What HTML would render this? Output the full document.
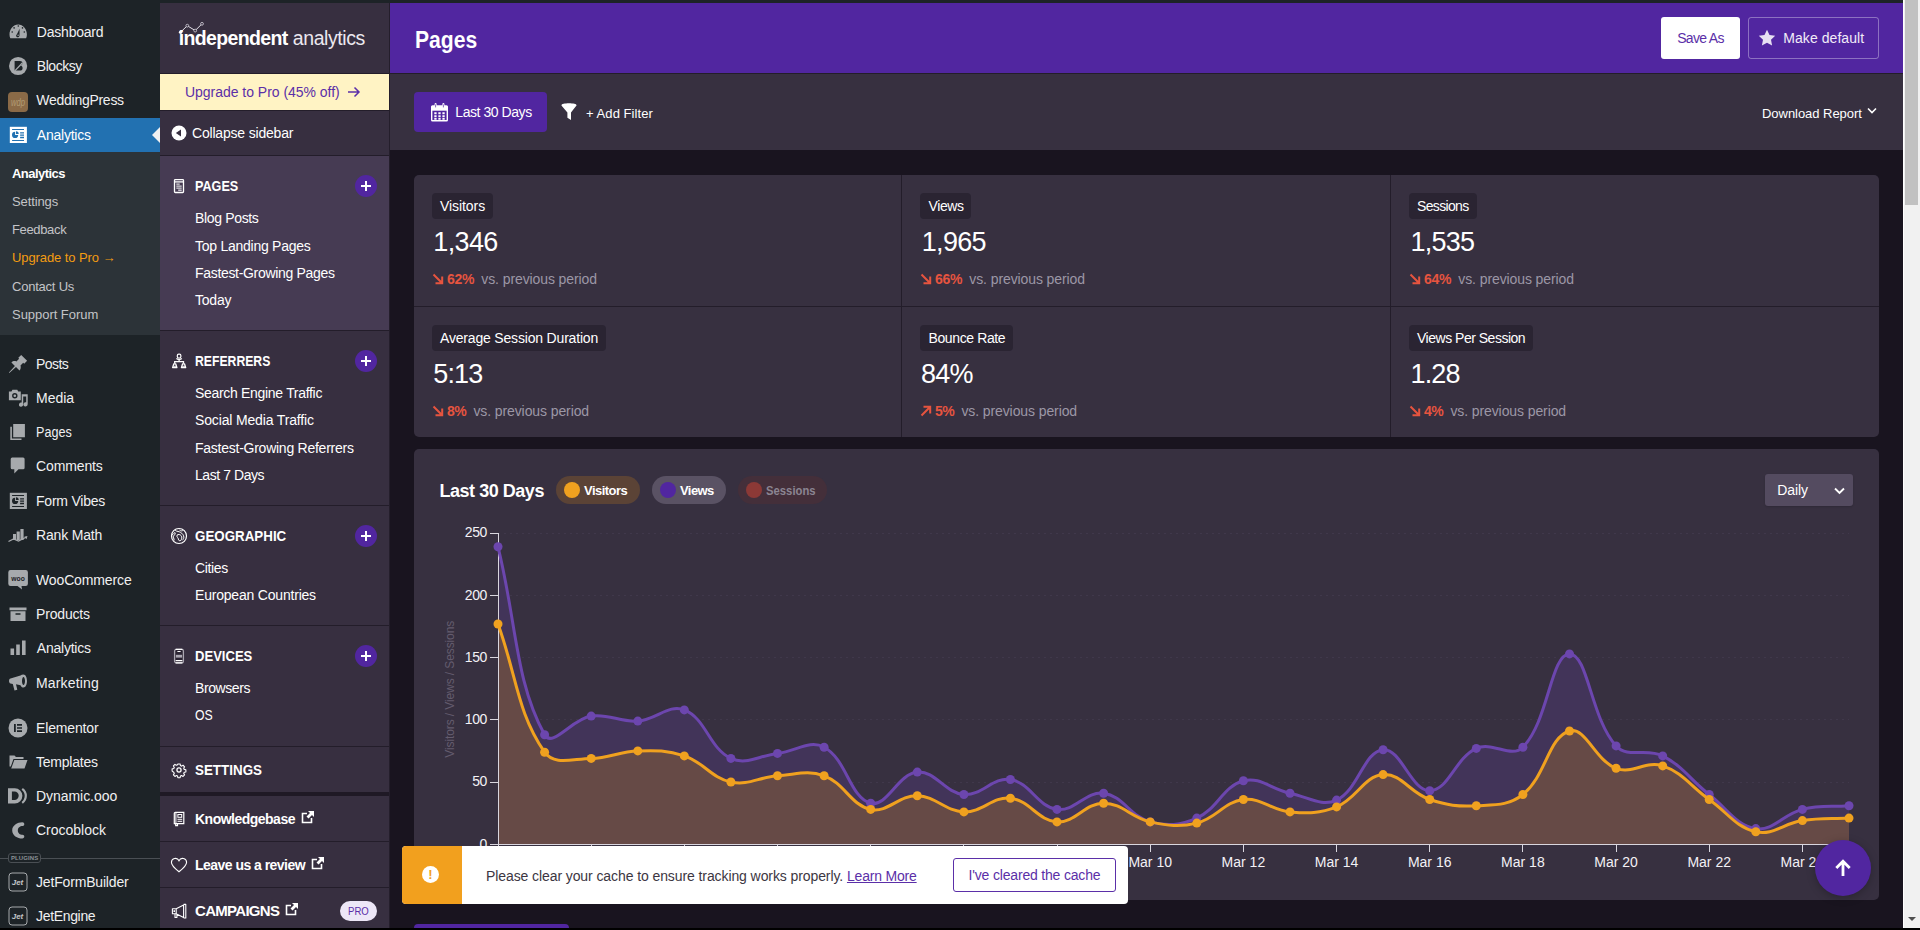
<!DOCTYPE html><html lang="en"><head><meta charset="utf-8"><title>Pages - Independent Analytics</title>
<style>
*{box-sizing:border-box;margin:0;padding:0}
html,body{width:1920px;height:930px;overflow:hidden;background:#19141f}
body{position:relative;font-family:"Liberation Sans",sans-serif;font-size:14px;color:#fff;-webkit-font-smoothing:antialiased}
.abs{position:absolute}
svg{display:block}
/* top / bottom strips */
#topstrip{position:absolute;left:0;top:0;width:1920px;height:3px;background:#1d2327;z-index:50}
#botstrip{position:absolute;left:0;top:928px;width:1920px;height:2px;background:#000;z-index:60}
/* scrollbar */
#sb{position:absolute;left:1903px;top:0;width:17px;height:928px;background:#f1f1f1;border-left:1px solid #fff;z-index:55}
#sb .thumb{position:absolute;left:1px;top:0;width:13px;height:205px;background:#c1c1c1}
#sb .arr{position:absolute;left:4px;width:0;height:0;border-left:4px solid transparent;border-right:4px solid transparent}
#sb .up{top:6px;border-bottom:4px solid #a3a3a3}
#sb .dn{top:917px;border-top:4px solid #505050}
/* WP admin menu */
#wp{position:absolute;left:0;top:0;width:160px;height:930px;background:#1d2327}
#wp .it{position:absolute;left:0;width:160px;height:34px;line-height:34px;color:#f0f0f1;font-size:14px;padding-left:36px;white-space:nowrap}
#wp .it svg{position:absolute;left:8px;top:7px;width:20px;height:20px}
#wp .act{background:#2271b1;color:#fff}
#wp .act:after{content:"";position:absolute;right:0;top:9px;border:8px solid transparent;border-right-color:#f0f0f1}
#wp .sub{position:absolute;left:0;top:152px;width:160px;height:183px;background:#2c3338}
#wp .si{position:absolute;left:12px;height:28px;line-height:28px;font-size:13px;color:#c3c4c7;white-space:nowrap}
#wp .plg{position:absolute;left:0;top:858px;width:160px;height:1px;background:#4a4f54}
#wp .plg span{position:absolute;left:8px;top:-5px;height:10px;line-height:8px;font-size:6px;font-weight:bold;letter-spacing:.1px;color:#8c9196;background:#1d2327;border:1px solid #4a4f54;border-radius:3px;padding:0 2px}
/* IA sidebar */
#ia{position:absolute;left:160px;top:0;width:229px;height:930px;background:#372f40}
#iab{position:absolute;left:389px;top:0;width:1px;height:930px;background:#241e2b}
#ia .ln{position:absolute;left:0;width:229px;height:1px;background:#231d2a}
#ia .h{position:absolute;left:35px;font-size:15px;font-weight:bold;color:#fff;height:24px;line-height:24px;white-space:nowrap}
#ia .m{position:absolute;left:35px;font-size:14px;color:#fff;height:22px;line-height:22px;white-space:nowrap}
#ia .ic{position:absolute;left:10px;width:18px;height:18px}
#ia .plus{position:absolute;left:195px;width:22px;height:22px;border-radius:11px;background:#5126a0}
#ia .plus:before{content:"";position:absolute;left:6px;top:10px;width:10px;height:2px;background:#fff}
#ia .plus:after{content:"";position:absolute;left:10px;top:6px;width:2px;height:10px;background:#fff}
/* main */
#hdr{position:absolute;left:390px;top:3px;width:1513px;height:70px;background:#5126a0}
#hdrl{position:absolute;left:390px;top:73px;width:1513px;height:1px;background:#231d2a}
#tb{position:absolute;left:390px;top:74px;width:1513px;height:76px;background:#373040}
.card{position:absolute;background:#373040;border-radius:5px}
.stat{position:absolute;width:488px;height:131px}
.stat .lb{position:absolute;left:18px;top:18px;height:26px;line-height:26px;padding:0 8px;background:#2a2432;border-radius:4px;font-size:14px;color:#fff;white-space:nowrap}
.stat .num{position:absolute;left:18px;top:48px;height:38px;line-height:38px;font-size:27px;color:#fff;white-space:nowrap}
.stat .chg{position:absolute;left:18px;top:93px;height:22px;line-height:22px;font-size:14px;color:#9c97a6;white-space:nowrap}
.stat .chg b{color:#e6543f;font-weight:bold;margin-left:15px;margin-right:7px}
.stat .chg svg{position:absolute;left:0;top:5px;width:12px;height:12px}
.pill{position:absolute;top:476px;height:28px;border-radius:14px;font-size:13px;font-weight:bold;line-height:28px;white-space:nowrap}
.pill i{position:absolute;left:8px;top:6px;width:16px;height:16px;border-radius:8px}
.pill>span{position:absolute;left:28px;top:1px}
.chart{position:absolute;left:0;top:0}
.chart text.ax{font-family:"Liberation Sans",sans-serif;font-size:14px;fill:#f3f1f6}
.chart text.ay{letter-spacing:-.4px}
.chart text.ayt{font-family:"Liberation Sans",sans-serif;font-size:12px;fill:#645c6e;letter-spacing:-.1px}
</style></head>
<body>
<div id="topstrip"></div><div id="botstrip"></div>
<div id="sb"><div class="thumb"></div><div class="arr dn"></div></div>

<div id="wp">
 <div class="it" style="top:15px"><svg viewBox="0 0 20 20"><path fill="#a7aaad" d="M2.300 16.200A8.700 8.700 0 0 1 1.500 12.500C1.500 7.200 5.400 2.500 10.200 2.500S18.900 7.200 18.900 12.500a8.700 8.700 0 0 1-.800 3.700z"></path><path fill="#1d2327" d="M11.600 6.800l-2.700 5.400a1.700 1.700 0 1 0 2.600 1.400zM9.500 4a.8.800 0 1 0 1.600 0 .8.800 0 0 0-1.600 0zM5.300 5.900a.8.800 0 1 0 1.600 0 .8.800 0 0 0-1.600 0zM13.700 5.900a.8.800 0 1 0 1.600 0 .8.800 0 0 0-1.600 0zM3.400 10a.8.800 0 1 0 1.600 0 .8.800 0 0 0-1.600 0zM15.500 10a.8.800 0 1 0 1.600 0 .8.800 0 0 0-1.600 0z"></path><circle cx="10.100" cy="13.300" r=".7" fill="#a7aaad"></circle></svg><span style="letter-spacing:-0.21px;position:relative;left:0.8px;">Dashboard</span></div>
 <div class="it" style="top:49px"><svg viewBox="0 0 20 20"><circle cx="10.100" cy="10" r="9.100" fill="#a7aaad"></circle><path fill="#1d2327" d="M6.600 5h5.400c1.500 0 2.400.9 2.400 2.200 0 1.100-.6 1.900-1.700 2.400 1.300.4 1.900 1.300 1.900 2.600 0 1.500-1 2.400-2.600 2.400H6.600z"></path><path d="M6.800 14.900L14.300 7" stroke="#a7aaad" stroke-width="1.300"></path></svg><span style="letter-spacing:-0.46px;position:relative;left:0.8px;">Blocksy</span></div>
 <div class="it" style="top:83px"><svg viewBox="0 0 20 20" style="top:9px"><rect x="0" y="0" width="20" height="20" rx="4" fill="#8a6a47"></rect><text x="10" y="13.500" text-anchor="middle" font-family="Liberation Sans,sans-serif" font-style="italic" font-size="10" textLength="14" lengthAdjust="spacingAndGlyphs" fill="#b39c74">wdp</text></svg><span style="letter-spacing:-0.27px;position:relative;left:0.3px;">WeddingPress</span></div>
 <div class="it act" style="top:118px"><svg viewBox="0 0 20 20"><rect x="1.800" y="1.800" width="17.100" height="16.200" fill="#fff"></rect><path d="M4.100 4.500H16M4.100 15.500H16" stroke="#2271b1" stroke-width="1"></path><path d="M12.100 7.800H16M12.100 10.100H16M12.100 12.500H16" stroke="#2271b1" stroke-width="1.300"></path><path d="M7.100 9.900V6.800A3.100 3.100 0 1 0 10.200 9.900z" fill="#2271b1"></path><path d="M8 9V6.300A2.700 2.700 0 0 1 10.700 9z" fill="#2271b1"></path></svg><span style="letter-spacing:-0.23px;position:relative;left:0.8px;">Analytics</span></div>
 <div class="sub">
  <div class="si" style="top:8px;color:#fff;font-weight:bold"><span style="letter-spacing:-0.55px;">Analytics</span></div>
  <div class="si" style="top:36px"><span style="letter-spacing:-0.11px;">Settings</span></div>
  <div class="si" style="top:64px"><span style="letter-spacing:-0.35px;">Feedback</span></div>
  <div class="si" style="top:92px;color:#f39c12"><span style="letter-spacing:-0.09px;">Upgrade to Pro →</span></div>
  <div class="si" style="top:121px"><span style="letter-spacing:-0.22px;">Contact Us</span></div>
  <div class="si" style="top:149px"><span style="letter-spacing:-0.04px;">Support Forum</span></div>
 </div>
 <div class="it" style="top:347px"><svg viewBox="0 0 20 20"><path fill="#a7aaad" d="M10.300 3.800L13.200.9l5.900 5.900-2.900 2.900-1-.9-2.700 2.700c.6 1.800.2 3.700-1 5l-3.500-3.500L1.300 19 .9 18.600l6-6.700-3.500-3.500c1.300-1.200 3.200-1.600 5-1l2.700-2.700z"></path></svg><span style="letter-spacing:-0.56px;">Posts</span></div>
 <div class="it" style="top:381px"><svg viewBox="0 0 20 20"><path fill="#a7aaad" d="M12.800 3.500v8.800H.9V3.500h2.600l.9-1.800h4.900l.9 1.800zM6.800 10.400a2.700 2.700 0 1 0 0-5.400 2.700 2.700 0 0 0 0 5.400zM6.800 9a1.300 1.300 0 1 1 0-2.600 1.300 1.300 0 0 1 0 2.600z" fill-rule="evenodd"></path><path fill="#a7aaad" d="M13.700 6.300h6v10a2.100 2.100 0 1 1-1.500-2V8.500h-3v8.100a2.100 2.100 0 1 1-1.500-2z"></path></svg><span style="letter-spacing:-0.01px;">Media</span></div>
 <div class="it" style="top:415px"><svg viewBox="0 0 20 20"><path fill="#a7aaad" d="M5.200 1.900h11.700v13.300H5.200zM2.300 4.700h1.600v11.700h9.600V18H2.300z"></path></svg><span style="display:inline-block;transform:scaleX(0.899);transform-origin:0 50%;">Pages</span></div>
 <div class="it" style="top:449px"><svg viewBox="0 0 20 20"><path fill="#a7aaad" d="M4.200 1.400h10.900a1.500 1.500 0 0 1 1.500 1.500v8.800a1.500 1.500 0 0 1-1.500 1.500h-4.600L6.300 17.400v-4.200H4.200a1.500 1.500 0 0 1-1.500-1.500V2.900a1.500 1.500 0 0 1 1.500-1.500z"></path></svg><span style="letter-spacing:-0.12px;">Comments</span></div>
 <div class="it" style="top:484px"><svg viewBox="0 0 20 20"><rect x="1.800" y="1.800" width="17.100" height="16.200" fill="#a7aaad"></rect><path d="M4.100 4.500H16M4.100 15.500H16" stroke="#1d2327" stroke-width="1"></path><path d="M12.100 7.800H16M12.100 10.100H16M12.100 12.500H16" stroke="#1d2327" stroke-width="1.300"></path><path d="M7.100 9.900V6.800A3.100 3.100 0 1 0 10.200 9.900z" fill="#1d2327"></path><path d="M8 9V6.300A2.700 2.700 0 0 1 10.700 9z" fill="#1d2327"></path></svg><span style="letter-spacing:-0.22px;">Form Vibes</span></div>
 <div class="it" style="top:518px"><svg viewBox="0 0 20 20"><path fill="#a7aaad" d="M5 9h3v6H5zM8.600 6.500h3.200V15H8.600zM12.400 4h3.200v11h-3.200z"></path><path fill="none" stroke="#a7aaad" stroke-width="1.200" d="M.500 16.500l5-2.500 5 2 8-4"></path><path fill="#a7aaad" d="M19.500 11l-1 3.200-2.200-2.400z"></path></svg><span style="letter-spacing:-0.17px;">Rank Math</span></div>
 <div class="it" style="top:563px"><svg viewBox="0 0 20 20"><path fill="#a7aaad" d="M2.500 0h15.200A2.200 2.200 0 0 1 19.900 2.200v11.600a2.200 2.200 0 0 1-2.200 2.200H13.500l.500 3.500-4.500-3.500H2.500a2.200 2.200 0 0 1-2.200-2.200V2.200A2.200 2.200 0 0 1 2.500 0z"></path><text x="10.100" y="10.800" text-anchor="middle" font-family="Liberation Sans,sans-serif" font-weight="bold" font-size="7" textLength="13.500" lengthAdjust="spacingAndGlyphs" fill="#1d2327">woo</text></svg><span style="letter-spacing:-0.13px;">WooCommerce</span></div>
 <div class="it" style="top:597px"><svg viewBox="0 0 20 20"><path fill="#a7aaad" d="M1.500 3.500h17v2.800h-17zM2.500 7.200h15V17h-15zM7.500 9.200v1.500h5V9.200z"></path></svg><span style="letter-spacing:-0.17px;">Products</span></div>
 <div class="it" style="top:631px"><svg viewBox="0 0 20 20"><path fill="#a7aaad" d="M2.500 10.500h3.600V17H2.500zM8.200 6.500h3.600V17H8.200zM14 2.500h3.600V17H14z"></path></svg><span style="letter-spacing:-0.23px;position:relative;left:0.8px;">Analytics</span></div>
 <div class="it" style="top:666px"><svg viewBox="0 0 20 20"><path fill="#a7aaad" d="M15.500 1.500c2 0 3.500 2.900 3.500 6.500s-1.500 6.500-3.500 6.500c-1.300 0-2.400-.9-3-2.300L8 11.200l1.300 5.600-2.800.700L4.800 11l-2.300-.5C1.500 10.300 1 9.200 1 8s.500-2.300 1.500-2.500l10-3C13.200 1.900 14.300 1.500 15.500 1.500zM15.500 4c-.800 0-1.500 1.800-1.500 4s.700 4 1.500 4S17 10.200 17 8s-.700-4-1.500-4z"></path></svg><span style="letter-spacing:0.16px;">Marketing</span></div>
 <div class="it" style="top:711px"><svg viewBox="0 0 20 20"><circle cx="10" cy="10" r="9.500" fill="#a7aaad"></circle><path fill="#1d2327" d="M6 6h1.800v8H6zM9 6h5v1.700H9zM9 9.150h5v1.700H9zM9 12.300h5V14H9z"></path></svg><span style="letter-spacing:-0.15px;">Elementor</span></div>
 <div class="it" style="top:745px"><svg viewBox="0 0 20 20"><path fill="#a7aaad" d="M1.500 3.500h5l1.500 1.500h7.500V7H5.500L2.800 14.500H1.500zM6.300 8H19.500l-3 8.500H3.200z"></path></svg><span style="letter-spacing:-0.23px;">Templates</span></div>
 <div class="it" style="top:779px"><svg viewBox="0 0 20 20"><path fill="#a7aaad" d="M0 2.200h6.800a7.600 7.600 0 0 1 0 15.200H0zM3.900 5.600v8.400h2.600a4.200 4.200 0 0 0 0-8.400z"></path><path fill="none" stroke="#a7aaad" stroke-width="2.200" d="M14.200 2.800a8.600 8.600 0 0 1 0 14"></path></svg><span style="letter-spacing:-0.05px;">Dynamic.ooo</span></div>
 <div class="it" style="top:813px"><svg viewBox="0 0 20 20"><path fill="#a7aaad" d="M14.300 2.300c1.300 0 2 .9 2 1.900 0 1.100-.800 1.800-1.900 1.800-2.300 0-4.600 1.700-4.600 4.400s2.300 4.400 4.600 4.400c1.100 0 1.900.7 1.900 1.800 0 1-.700 1.900-2 1.900C9.300 18.500 4.200 15.300 4.200 10.400S9.300 2.300 14.300 2.300z"></path></svg><span style="letter-spacing:-0.01px;">Crocoblock</span></div>
 <div class="plg"><span>PLUGINS</span></div>
 <div class="it" style="top:865px"><svg viewBox="0 0 20 20"><rect x="1" y="1" width="18" height="18" rx="3" fill="none" stroke="#a7aaad" stroke-width="1"></rect><text x="9.500" y="13" text-anchor="middle" font-family="Liberation Sans,sans-serif" font-style="italic" font-weight="bold" font-size="8" fill="#c3c5c8">Jet</text></svg><span style="letter-spacing:-0.17px;">JetFormBuilder</span></div>
 <div class="it" style="top:899px"><svg viewBox="0 0 20 20"><rect x="1" y="1" width="18" height="18" rx="3" fill="none" stroke="#a7aaad" stroke-width="1"></rect><text x="9.500" y="13" text-anchor="middle" font-family="Liberation Sans,sans-serif" font-style="italic" font-weight="bold" font-size="8" fill="#c3c5c8">Jet</text></svg><span style="letter-spacing:-0.33px;">JetEngine</span></div>
</div>

<div id="ia">
 <!-- logo -->
 <svg class="abs" style="left:18px;top:20px" width="40" height="16" viewBox="0 0 40 16"><path d="M2.600 12.200L9.300 5.700l7.900 4.900L24 3.800" fill="none" stroke="#e4e1e9" stroke-width="1"></path><circle cx="2.600" cy="12.200" r="1.700" fill="#fff"></circle><circle cx="9.300" cy="5.700" r="1.400" fill="#372f40" stroke="#d6d2dc" stroke-width=".8"></circle><circle cx="17.200" cy="10.600" r="1.400" fill="#372f40" stroke="#d6d2dc" stroke-width=".8"></circle><circle cx="24" cy="3.800" r="1.400" fill="#372f40" stroke="#d6d2dc" stroke-width=".8"></circle></svg>
 <div class="abs" id="logo" style="left:19px;top:24px;height:28px;line-height:28px;font-size:19.5px;white-space:nowrap;letter-spacing:-.9px"><b><span style="letter-spacing:-0.64px;position:relative;left:-0.3px;">independent</span></b> <span style="color:#ebe8ef;letter-spacing:-.5px"><span style="letter-spacing:-0.43px;position:relative;left:0.4px;">analytics</span></span></div>
 <div class="ln" style="top:73px"></div>
 <!-- upgrade banner -->
 <div class="abs" style="left:0;top:74px;width:229px;height:36px;background:#fff3c4"></div>
 <div class="abs" id="upg" style="left:25px;top:74px;height:36px;line-height:36px;font-size:14px;color:#5b2fa8;white-space:nowrap"><span style="letter-spacing:-0.03px;">Upgrade to Pro (45% off)</span></div>
 <svg class="abs" style="left:187px;top:86px" width="14" height="12" viewBox="0 0 14 12"><path d="M1 6h11M7.500 1.500L12 6l-4.500 4.500" fill="none" stroke="#5b2fa8" stroke-width="1.500"></path></svg>
 <div class="ln" style="top:110px"></div>
 <!-- collapse -->
 <svg class="abs" style="left:11px;top:125px" width="16" height="16" viewBox="0 0 16 16"><circle cx="8" cy="8" r="7.500" fill="#fff"></circle><path d="M10 4.500v7L4.800 8z" fill="#372f40"></path></svg>
 <div class="m" id="coll" style="left:32px;top:122px"><span style="letter-spacing:-0.19px;">Collapse sidebar</span></div>
 <div class="ln" style="top:155px"></div>
 <!-- PAGES active -->
 <div class="abs" style="left:0;top:156px;width:229px;height:174px;background:#463b53"></div>
 <svg class="ic" style="top:177px" viewBox="0 0 18 18"><rect x="4.500" y="2.600" width="9" height="12.900" rx=".8" fill="none" stroke="#fff" stroke-width="1.300"></rect><path d="M4.500 4.900h9" stroke="#fff" stroke-width="1.300"></path><path d="M6.300 7.100h3.400M6.300 9.100h5.400M6.300 11.100h5.400" stroke="#fff" stroke-width="1"></path><rect x="8.200" y="12.500" width="3.500" height="1.400" fill="#d9d6de"></rect></svg>
 <div class="h" style="top:174px"><span style="display:inline-block;transform:scaleX(0.842);transform-origin:0 50%;">PAGES</span></div><div class="plus" style="top:175px"></div>
 <div class="m" style="top:207px"><span style="letter-spacing:-0.34px;">Blog Posts</span></div>
 <div class="m" style="top:235px"><span style="letter-spacing:-0.26px;">Top Landing Pages</span></div>
 <div class="m" style="top:262px"><span style="letter-spacing:-0.32px;">Fastest-Growing Pages</span></div>
 <div class="m" style="top:289px"><span style="letter-spacing:-0.23px;">Today</span></div>
 <div class="ln" style="top:330px"></div>
 <!-- REFERRERS -->
 <svg class="ic" style="top:352px" viewBox="0 0 18 18"><rect x="7.300" y="2.200" width="3.600" height="3.800" rx="1.500" fill="none" stroke="#fff" stroke-width="1.200"></rect><path d="M6.500 6.400c.700 1.200 4.500 1.200 5.200 0" fill="none" stroke="#fff" stroke-width="1.300"></path><path d="M9.100 7.600v1.900M4.700 11.500V9.600h8.800v1.900" fill="none" stroke="#fff" stroke-width="1.300"></path><path d="M2.600 15.600l1.200-3.800h1.900l1.200 3.800zM11.400 15.600l1.200-3.800h1.900l1.200 3.800z" fill="none" stroke="#fff" stroke-width="1.300" stroke-linejoin="round"></path><path d="M3.300 14.300h3M12.100 14.300h3" stroke="#fff" stroke-width=".9"></path></svg>
 <div class="h" style="top:349px"><span style="display:inline-block;transform:scaleX(0.814);transform-origin:0 50%;">REFERRERS</span></div><div class="plus" style="top:350px"></div>
 <div class="m" style="top:382px"><span style="letter-spacing:-0.31px;">Search Engine Traffic</span></div>
 <div class="m" style="top:409px"><span style="letter-spacing:-0.15px;">Social Media Traffic</span></div>
 <div class="m" style="top:437px"><span style="letter-spacing:-0.25px;">Fastest-Growing Referrers</span></div>
 <div class="m" style="top:464px"><span style="letter-spacing:-0.43px;">Last 7 Days</span></div>
 <div class="ln" style="top:505px"></div>
 <!-- GEOGRAPHIC -->
 <svg class="ic" style="top:527px" viewBox="0 0 18 18"><circle cx="9" cy="9" r="7.500" fill="none" stroke="#fff" stroke-width="1.200"></circle><path d="M5 2.800c.600 1.700 2.700 1.300 4.300 2s3.500 1.900 4.300 4-.4 3.600-1.300 4.500M2 8c1.500-.5 1.800-2.200 3-2.500.9 1-.5 2.500-1.500 3.500s1 2.500.5 4.500M7 8.200c1.200-1.200 3.200-.8 4.200.5s.8 3.500-.400 4.600-2.300.2-2.500-1.300-.9-1.300-1.300-2.300zM12.800 3.600c-1 .6-2.200.3-3.300-.5" fill="none" stroke="#fff" stroke-width="1"></path></svg>
 <div class="h" style="top:524px"><span style="display:inline-block;transform:scaleX(0.890);transform-origin:0 50%;">GEOGRAPHIC</span></div><div class="plus" style="top:525px"></div>
 <div class="m" style="top:557px"><span style="letter-spacing:-0.34px;">Cities</span></div>
 <div class="m" style="top:584px"><span style="letter-spacing:-0.20px;">European Countries</span></div>
 <div class="ln" style="top:625px"></div>
 <!-- DEVICES -->
 <svg class="ic" style="top:647px" viewBox="0 0 18 18"><rect x="4.600" y="2.400" width="8.800" height="13.400" rx="1.600" fill="#2b2433" stroke="#aaa6b1" stroke-width="1.300"></rect><path d="M5.600 2.400h6.800M5.600 15.800h6.800M5.600 13.600h6.800" stroke="#fff" stroke-width="1.300"></path><path d="M7.400 4h3.200v1h-3.200z" fill="#fff"></path><path d="M5.900 7.800h6.200v2.800H5.900z" fill="#aaa6b1"></path></svg>
 <div class="h" style="top:644px"><span style="display:inline-block;transform:scaleX(0.870);transform-origin:0 50%;">DEVICES</span></div><div class="plus" style="top:645px"></div>
 <div class="m" style="top:677px"><span style="letter-spacing:-0.42px;">Browsers</span></div>
 <div class="m" style="top:704px"><span style="display:inline-block;transform:scaleX(0.875);transform-origin:0 50%;">OS</span></div>
 <div class="ln" style="top:746px"></div>
 <!-- SETTINGS -->
 <svg class="ic" style="top:761px" viewBox="0 0 18 18"><g transform="translate(9 9) scale(.86) translate(-9 -9)"><circle cx="9" cy="9" r="2.400" fill="none" stroke="#fff" stroke-width="1.500"></circle><path d="M7.700 2h2.600l.4 1.900 1.300.6 1.700-1 1.800 1.800-1 1.700.6 1.300 1.900.4v2.600l-1.900.4-.6 1.300 1 1.700-1.800 1.800-1.700-1-1.300.6-.4 1.900H7.700l-.4-1.900-1.300-.6-1.700 1-1.800-1.800 1-1.700-.6-1.300L1 10.300V7.700l1.900-.4.600-1.300-1-1.700 1.800-1.800 1.700 1 1.300-.6z" fill="none" stroke="#fff" stroke-width="1.300" stroke-linejoin="round"></path></g></svg>
 <div class="h" style="top:758px"><span style="display:inline-block;transform:scaleX(0.893);transform-origin:0 50%;">SETTINGS</span></div>
 <div class="ln" style="top:792px;height:4px;background:#1f1925"></div>
 <!-- Knowledgebase -->
 <svg class="ic" style="top:810px" viewBox="0 0 18 18"><path d="M5.300 2.300h8.500v11.400H4.300V3.300a1 1 0 0 1 1-1zM5.700 13.700v2h1.800v-2" fill="none" stroke="#fff" stroke-width="1.200"></path><path d="M5.900 2.300v11.400" stroke="#fff" stroke-width="1"></path><rect x="7.900" y="4.500" width="3.800" height="2.800" fill="none" stroke="#fff" stroke-width="1"></rect><path d="M7.500 9.300h4.700M7.500 11.300h4.700" stroke="#fff" stroke-width="1"></path></svg>
 <div class="h" style="top:807px;font-size:14px"><span style="letter-spacing:-0.51px;">Knowledgebase</span></div>
 <svg class="abs ext" style="left:141px;top:810px" width="14" height="14" viewBox="0 0 14 14"><path d="M10.500 8v4.500h-9v-9H6" fill="none" stroke="#fff" stroke-width="1.600"></path><path d="M7 1h6v6l-2-2-3.500 3.500-2-2L9 3z" fill="#fff"></path></svg>
 <div class="ln" style="top:841px"></div>
 <svg class="ic" style="top:856px" viewBox="0 0 18 18"><path d="M9 15.700C3.500 11.500 1.400 9 1.400 6.300A4 4 0 0 1 9 4.700a4 4 0 0 1 7.600 1.600C16.600 9 14.500 11.500 9 15.700z" fill="none" stroke="#fff" stroke-width="1.100"></path></svg>
 <div class="h" style="top:853px;font-size:14px"><span style="letter-spacing:-0.53px;">Leave us a review</span></div>
 <svg class="abs ext" style="left:151px;top:856px" width="14" height="14" viewBox="0 0 14 14"><path d="M10.500 8v4.500h-9v-9H6" fill="none" stroke="#fff" stroke-width="1.600"></path><path d="M7 1h6v6l-2-2-3.500 3.500-2-2L9 3z" fill="#fff"></path></svg>
 <div class="ln" style="top:887px"></div>
 <svg class="ic" style="top:902px" viewBox="0 0 18 18"><path d="M2.400 6.700h3.800v5H2.400zM6.200 6.700L13.600 3v12.400L6.200 11.700M13.600 2.400h2.200v13.600h-2.200M5 11.700v3.800h1.900v-3.800" fill="none" stroke="#fff" stroke-width="1.100" stroke-linejoin="round"></path><path d="M3.500 8.300h1.500v1.600H3.500z" fill="#fff"></path></svg>
 <div class="h" style="top:899px"><span style="letter-spacing:-0.70px;">CAMPAIGNS</span></div>
 <svg class="abs ext" style="left:125px;top:902px" width="14" height="14" viewBox="0 0 14 14"><path d="M10.500 8v4.500h-9v-9H6" fill="none" stroke="#fff" stroke-width="1.600"></path><path d="M7 1h6v6l-2-2-3.500 3.500-2-2L9 3z" fill="#fff"></path></svg>
 <div class="abs" style="left:180px;top:901px;width:37px;height:20px;border-radius:10px;background:#ede7f7;color:#5b2fa8;font-size:11px;line-height:20px;text-align:center"><span style="display:inline-block;transform:scaleX(0.872);transform-origin:0 50%;position:relative;left:1.7px;">PRO</span></div>
</div>
<div id="iab"></div>

<div id="hdr"></div><div id="hdrl"></div><div id="tb"></div>
<div class="abs" id="ttl" style="left:414px;top:23px;height:34px;line-height:34px;font-size:24px;font-weight:bold;white-space:nowrap"><span style="display:inline-block;transform:scaleX(0.880);transform-origin:0 50%;position:relative;left:0.9px;">Pages</span></div>
<div class="abs" style="left:1661px;top:17px;width:79px;height:42px;background:#fff;border-radius:3px;color:#5b2fa8;font-size:14px;line-height:42px;text-align:center" id="saveas"><span style="letter-spacing:-0.68px;">Save As</span></div>
<div class="abs" style="left:1748px;top:17px;width:131px;height:42px;border:1px solid rgba(255,255,255,.35);border-radius:3px"></div>
<svg class="abs" style="left:1758px;top:29px" width="18" height="17" viewBox="0 0 18 17"><path d="M9 .8l2.500 5.300 5.700.700-4.200 4 1.100 5.700L9 13.700l-5.100 2.800L5 10.800.8 6.800l5.700-.700z" fill="#e6dff2"></path></svg>
<div class="abs" id="mkdef" style="left:1783px;top:17px;height:42px;line-height:42px;font-size:14px;color:#f1ecf8;white-space:nowrap"><span style="letter-spacing:0.06px;position:relative;left:0.3px;">Make default</span></div>
<!-- toolbar -->
<div class="abs" style="left:414px;top:92px;width:133px;height:40px;background:#5126a0;border-radius:4px"></div>
<svg class="abs" style="left:431px;top:103px" width="17" height="19" viewBox="0 0 17 19"><rect x=".7" y="3" width="15.600" height="14.800" rx=".8" fill="none" stroke="#fff" stroke-width="1.400"></rect><path d="M.7 3h15.600v4.700H.7z" fill="#fff"></path><path d="M4.600 1v3.500M12.400 1v3.500" stroke="#fff" stroke-width="2" stroke-linecap="round"></path><path d="M4.600 1.800v2.200M12.400 1.800v2.200" stroke="#5126a0" stroke-width=".7" stroke-linecap="round"></path><path d="M3.300 9.300h2.300v2h-2.300zM7.350 9.300h2.300v2h-2.300zM11.400 9.300h2.300v2h-2.300zM3.300 12.200h2.300v2h-2.300zM7.350 12.200h2.300v2h-2.300zM11.400 12.200h2.300v2h-2.300zM3.300 15.100h2.300v1.700h-2.300zM7.350 15.100h2.300v1.700h-2.300zM11.400 15.100h2.300v1.700h-2.300z" fill="#fff"></path></svg>
<div class="abs" id="l30" style="left:455px;top:92px;height:40px;line-height:40px;font-size:14px;white-space:nowrap"><span style="letter-spacing:-0.44px;position:relative;left:0.3px;">Last 30 Days</span></div>
<svg class="abs" style="left:561px;top:103px" width="16" height="18" viewBox="0 0 16 18"><path d="M.500 2.200C.500 1 3.800.300 8 .300s7.500.700 7.500 1.900c0 .600-.600 1.100-1.200 1.700L10 9.500V17l-3.600-2.200V9.500L1.700 3.900C1.100 3.300.500 2.800.500 2.200z" fill="#fff"></path></svg>
<div class="abs" id="addf" style="left:585px;top:94px;height:40px;line-height:40px;font-size:13px;white-space:nowrap"><span style="letter-spacing:0.06px;position:relative;left:1.0px;">+ Add Filter</span></div>
<div class="abs" id="dlr" style="left:1762px;top:94px;height:40px;line-height:40px;font-size:13px;white-space:nowrap"><span style="letter-spacing:-0.04px;">Download Report</span></div>
<svg class="abs" style="left:1867px;top:107px" width="10" height="8" viewBox="0 0 10 8"><path d="M1 1.500l4 4 4-4" fill="none" stroke="#fff" stroke-width="1.600"></path></svg>

<!-- stats -->
<div class="card" style="left:414px;top:175px;width:1465px;height:262px"></div>
<div class="abs" style="left:901px;top:175px;width:1px;height:262px;background:#231d2a"></div>
<div class="abs" style="left:1390px;top:175px;width:1px;height:262px;background:#231d2a"></div>
<div class="abs" style="left:414px;top:306px;width:1465px;height:1px;background:#231d2a"></div>

<div class="stat" style="left:414px;top:175px"><div class="lb"><span style="letter-spacing:-0.07px;">Visitors</span></div><div class="num"><span style="letter-spacing:-0.62px;position:relative;left:1.3px;">1,346</span></div><div class="chg"><svg viewBox="0 0 12 12"><path d="M1.500 1.500l8.500 8.500M3.500 10.200h6.700V3.500" fill="none" stroke="#e6543f" stroke-width="2"></path></svg><b><span style="letter-spacing:-0.24px;">62%</span></b><span style="letter-spacing:-0.10px;">vs. previous period</span></div></div>
<div class="stat" style="left:902px;top:175px"><div class="lb"><span style="letter-spacing:-0.38px;position:relative;left:0.5px;">Views</span></div><div class="num"><span style="letter-spacing:-0.70px;position:relative;left:1.8px;">1,965</span></div><div class="chg"><svg viewBox="0 0 12 12"><path d="M1.500 1.500l8.500 8.500M3.500 10.200h6.700V3.500" fill="none" stroke="#e6543f" stroke-width="2"></path></svg><b><span style="letter-spacing:-0.24px;">66%</span></b><span style="letter-spacing:-0.10px;">vs. previous period</span></div></div>
<div class="stat" style="left:1391px;top:175px"><div class="lb"><span style="letter-spacing:-0.66px;">Sessions</span></div><div class="num"><span style="letter-spacing:-0.78px;position:relative;left:1.6px;">1,535</span></div><div class="chg"><svg viewBox="0 0 12 12"><path d="M1.500 1.500l8.500 8.500M3.500 10.200h6.700V3.500" fill="none" stroke="#e6543f" stroke-width="2"></path></svg><b><span style="letter-spacing:-0.24px;">64%</span></b><span style="letter-spacing:-0.10px;">vs. previous period</span></div></div>
<div class="stat" style="left:414px;top:307px"><div class="lb"><span style="letter-spacing:-0.18px;">Average Session Duration</span></div><div class="num"><span style="letter-spacing:-0.89px;position:relative;left:1.3px;">5:13</span></div><div class="chg"><svg viewBox="0 0 12 12"><path d="M1.500 1.500l8.500 8.500M3.500 10.200h6.700V3.500" fill="none" stroke="#e6543f" stroke-width="2"></path></svg><b><span style="letter-spacing:-0.42px;">8%</span></b><span style="letter-spacing:-0.10px;">vs. previous period</span></div></div>
<div class="stat" style="left:902px;top:307px"><div class="lb"><span style="letter-spacing:-0.38px;position:relative;left:0.5px;">Bounce Rate</span></div><div class="num"><span style="letter-spacing:-0.72px;position:relative;left:1.0px;">84%</span></div><div class="chg"><svg viewBox="0 0 12 12"><path d="M1.500 10.500l8.500-8.500M3.500 1.800h6.700v6.700" fill="none" stroke="#e6543f" stroke-width="2"></path></svg><b><span style="letter-spacing:-0.42px;">5%</span></b><span style="letter-spacing:-0.10px;">vs. previous period</span></div></div>
<div class="stat" style="left:1391px;top:307px"><div class="lb"><span style="letter-spacing:-0.49px;">Views Per Session</span></div><div class="num"><span style="letter-spacing:-0.87px;position:relative;left:1.6px;">1.28</span></div><div class="chg"><svg viewBox="0 0 12 12"><path d="M1.500 1.500l8.500 8.500M3.500 10.200h6.700V3.500" fill="none" stroke="#e6543f" stroke-width="2"></path></svg><b><span style="letter-spacing:-0.42px;">4%</span></b><span style="letter-spacing:-0.10px;">vs. previous period</span></div></div>

<!-- chart card -->
<div class="card" style="left:414px;top:449px;width:1465px;height:451px"></div>
<div class="abs" id="ct" style="left:439px;top:477px;height:28px;line-height:28px;font-size:18px;font-weight:bold;white-space:nowrap"><span style="letter-spacing:-0.47px;position:relative;left:0.5px;">Last 30 Days</span></div>
<div class="pill" style="left:556px;width:84px;background:#5b4336;color:#fff"><i style="background:#f0a11f"></i><span><span style="letter-spacing:-0.52px;">Visitors</span></span></div>
<div class="pill" style="left:652px;width:74px;background:#5a5264;color:#fff"><i style="background:#5126a0"></i><span><span style="letter-spacing:-0.57px;">Views</span></span></div>
<div class="pill" style="left:738px;width:89px;background:#442f3a;color:#8b8592"><i style="background:#8c3936"></i><span><span style="display:inline-block;transform:scaleX(0.869);transform-origin:0 50%;">Sessions</span></span></div>
<div class="abs" style="left:1765px;top:474px;width:88px;height:32px;background:#544b60;box-shadow:0 1px 2px rgba(0,0,0,.15);border-radius:3px"></div>
<div class="abs" id="daily" style="left:1777px;top:474px;height:32px;line-height:32px;font-size:14px;white-space:nowrap"><span style="letter-spacing:-0.10px;position:relative;left:0.3px;">Daily</span></div>
<svg class="abs" style="left:1834px;top:487px" width="11" height="8" viewBox="0 0 11 8"><path d="M1 1.500l4.500 4.500 4.500-4.500" fill="none" stroke="#fff" stroke-width="1.900"></path></svg>
<svg class="chart" width="1920" height="930" viewBox="0 0 1920 930">
<line x1="498" x2="1849" y1="782.5" y2="782.5" stroke="#40384b" stroke-width="1" stroke-dasharray="2 4"></line>
<line x1="498" x2="1849" y1="719.5" y2="719.5" stroke="#40384b" stroke-width="1" stroke-dasharray="2 4"></line>
<line x1="498" x2="1849" y1="657.5" y2="657.5" stroke="#40384b" stroke-width="1" stroke-dasharray="2 4"></line>
<line x1="498" x2="1849" y1="595.5" y2="595.5" stroke="#40384b" stroke-width="1" stroke-dasharray="2 4"></line>
<line x1="498" x2="1849" y1="533.5" y2="533.5" stroke="#40384b" stroke-width="1" stroke-dasharray="2 4"></line>
<path d="M498.0 546.8 C516.6 622.0 515.0 681.0 544.6 734.7 C552.3 748.7 571.9 718.9 591.2 716.1 C609.2 713.4 619.3 722.3 637.8 721.1 C656.6 719.8 668.8 703.6 684.3 709.9 C706.1 718.6 709.0 748.1 730.9 758.4 C746.2 765.5 758.9 755.6 777.5 753.4 C796.2 751.2 809.5 739.4 824.1 747.2 C846.8 759.3 849.6 797.6 870.7 803.2 C886.9 807.5 897.9 773.9 917.3 772.1 C935.2 770.4 944.7 792.9 963.9 794.5 C982.0 795.9 993.0 776.7 1010.4 779.5 C1030.2 782.7 1037.3 806.5 1057.0 809.4 C1074.6 812.0 1085.9 790.9 1103.6 793.2 C1123.2 795.8 1130.1 816.5 1150.2 821.9 C1167.4 826.4 1180.4 825.3 1196.8 818.1 C1217.7 808.9 1222.8 786.3 1243.4 780.8 C1260.0 776.3 1271.1 789.3 1290.0 793.2 C1308.4 797.0 1321.4 807.2 1336.6 800.1 C1358.7 789.7 1363.6 751.6 1383.1 749.7 C1400.8 747.9 1411.2 791.0 1429.7 790.7 C1448.5 790.5 1454.9 758.4 1476.3 748.4 C1492.2 741.0 1511.4 758.9 1522.9 747.2 C1548.7 721.0 1550.7 654.1 1569.5 653.9 C1588.0 653.6 1590.6 718.0 1616.1 745.9 C1627.8 758.8 1646.2 747.3 1662.7 755.9 C1683.5 766.8 1690.2 779.6 1709.2 794.5 C1727.4 808.7 1735.9 825.4 1755.8 828.6 C1773.2 831.4 1783.1 814.2 1802.4 809.4 C1820.4 805.0 1830.4 807.2 1849.0 805.7 L1849.0 844.5 L498.0 844.5 Z" fill="#423459"></path>
<path d="M498.0 624.0 C516.6 675.3 516.9 712.2 544.6 752.2 C554.1 765.9 572.6 758.6 591.2 758.4 C609.8 758.1 619.1 751.4 637.8 750.9 C656.3 750.4 666.9 750.1 684.3 755.9 C704.2 762.5 711.1 777.8 730.9 782.0 C748.4 785.8 758.8 777.1 777.5 775.8 C796.1 774.6 807.4 769.8 824.1 775.8 C844.7 783.2 850.5 805.1 870.7 809.4 C887.8 813.1 898.8 795.2 917.3 795.7 C936.1 796.2 945.1 811.4 963.9 811.9 C982.4 812.4 992.5 796.3 1010.4 798.2 C1029.8 800.3 1038.0 820.8 1057.0 821.9 C1075.3 822.8 1085.0 803.2 1103.6 803.2 C1122.3 803.2 1130.9 817.7 1150.2 821.9 C1168.2 825.7 1179.2 827.3 1196.8 823.1 C1216.5 818.4 1224.0 801.8 1243.4 799.5 C1261.3 797.3 1271.1 810.4 1290.0 811.9 C1308.3 813.4 1319.7 813.7 1336.6 806.9 C1357.0 798.7 1363.8 776.1 1383.1 774.6 C1401.1 773.1 1410.0 792.9 1429.7 799.5 C1447.3 805.3 1457.9 806.7 1476.3 805.7 C1495.1 804.7 1508.8 805.8 1522.9 794.5 C1546.1 775.9 1548.3 737.0 1569.5 731.0 C1585.6 726.5 1595.1 760.5 1616.1 768.3 C1632.4 774.5 1646.0 760.3 1662.7 765.9 C1683.2 772.7 1690.5 786.2 1709.2 799.5 C1727.8 812.6 1735.6 827.2 1755.8 831.8 C1772.9 835.7 1783.5 823.4 1802.4 820.6 C1820.8 817.9 1830.4 819.1 1849.0 818.1 L1849.0 844.5 L498.0 844.5 Z" fill="#664a46"></path>
<line x1="498.5" x2="498.5" y1="533" y2="845" stroke="#d9d6de" stroke-width="1"></line>
<line x1="498" x2="1850" y1="844.5" y2="844.5" stroke="#d9d6de" stroke-width="1"></line>
<line x1="490" x2="498" y1="844.5" y2="844.5" stroke="#d9d6de" stroke-width="1"></line>
<text x="487" y="848.5" text-anchor="end" class="ax ay">0</text>
<line x1="490" x2="498" y1="782.5" y2="782.5" stroke="#d9d6de" stroke-width="1"></line>
<text x="487" y="786.3" text-anchor="end" class="ax ay">50</text>
<line x1="490" x2="498" y1="719.5" y2="719.5" stroke="#d9d6de" stroke-width="1"></line>
<text x="487" y="724.1" text-anchor="end" class="ax ay">100</text>
<line x1="490" x2="498" y1="657.5" y2="657.5" stroke="#d9d6de" stroke-width="1"></line>
<text x="487" y="661.8" text-anchor="end" class="ax ay">150</text>
<line x1="490" x2="498" y1="595.5" y2="595.5" stroke="#d9d6de" stroke-width="1"></line>
<text x="487" y="599.6" text-anchor="end" class="ax ay">200</text>
<line x1="490" x2="498" y1="533.5" y2="533.5" stroke="#d9d6de" stroke-width="1"></line>
<text x="487" y="537.4" text-anchor="end" class="ax ay">250</text>
<line x1="498.5" x2="498.5" y1="845" y2="852" stroke="#d9d6de" stroke-width="1"></line>
<text x="498.0" y="866.6" text-anchor="middle" class="ax">Feb 24</text>
<line x1="591.5" x2="591.5" y1="845" y2="852" stroke="#d9d6de" stroke-width="1"></line>
<text x="591.2" y="866.6" text-anchor="middle" class="ax">Feb 26</text>
<line x1="684.5" x2="684.5" y1="845" y2="852" stroke="#d9d6de" stroke-width="1"></line>
<text x="684.3" y="866.6" text-anchor="middle" class="ax">Feb 28</text>
<line x1="777.5" x2="777.5" y1="845" y2="852" stroke="#d9d6de" stroke-width="1"></line>
<text x="777.5" y="866.6" text-anchor="middle" class="ax">Mar 2</text>
<line x1="870.5" x2="870.5" y1="845" y2="852" stroke="#d9d6de" stroke-width="1"></line>
<text x="870.7" y="866.6" text-anchor="middle" class="ax">Mar 4</text>
<line x1="963.5" x2="963.5" y1="845" y2="852" stroke="#d9d6de" stroke-width="1"></line>
<text x="963.9" y="866.6" text-anchor="middle" class="ax">Mar 6</text>
<line x1="1057.5" x2="1057.5" y1="845" y2="852" stroke="#d9d6de" stroke-width="1"></line>
<text x="1057.0" y="866.6" text-anchor="middle" class="ax">Mar 8</text>
<line x1="1150.5" x2="1150.5" y1="845" y2="852" stroke="#d9d6de" stroke-width="1"></line>
<text x="1150.2" y="866.6" text-anchor="middle" class="ax">Mar 10</text>
<line x1="1243.5" x2="1243.5" y1="845" y2="852" stroke="#d9d6de" stroke-width="1"></line>
<text x="1243.4" y="866.6" text-anchor="middle" class="ax">Mar 12</text>
<line x1="1336.5" x2="1336.5" y1="845" y2="852" stroke="#d9d6de" stroke-width="1"></line>
<text x="1336.6" y="866.6" text-anchor="middle" class="ax">Mar 14</text>
<line x1="1429.5" x2="1429.5" y1="845" y2="852" stroke="#d9d6de" stroke-width="1"></line>
<text x="1429.7" y="866.6" text-anchor="middle" class="ax">Mar 16</text>
<line x1="1522.5" x2="1522.5" y1="845" y2="852" stroke="#d9d6de" stroke-width="1"></line>
<text x="1522.9" y="866.6" text-anchor="middle" class="ax">Mar 18</text>
<line x1="1616.5" x2="1616.5" y1="845" y2="852" stroke="#d9d6de" stroke-width="1"></line>
<text x="1616.1" y="866.6" text-anchor="middle" class="ax">Mar 20</text>
<line x1="1709.5" x2="1709.5" y1="845" y2="852" stroke="#d9d6de" stroke-width="1"></line>
<text x="1709.2" y="866.6" text-anchor="middle" class="ax">Mar 22</text>
<line x1="1802.5" x2="1802.5" y1="845" y2="852" stroke="#d9d6de" stroke-width="1"></line>
<text x="1802.4" y="866.6" text-anchor="middle" class="ax">Mar 24</text>
<path d="M498.0 546.8 C516.6 622.0 515.0 681.0 544.6 734.7 C552.3 748.7 571.9 718.9 591.2 716.1 C609.2 713.4 619.3 722.3 637.8 721.1 C656.6 719.8 668.8 703.6 684.3 709.9 C706.1 718.6 709.0 748.1 730.9 758.4 C746.2 765.5 758.9 755.6 777.5 753.4 C796.2 751.2 809.5 739.4 824.1 747.2 C846.8 759.3 849.6 797.6 870.7 803.2 C886.9 807.5 897.9 773.9 917.3 772.1 C935.2 770.4 944.7 792.9 963.9 794.5 C982.0 795.9 993.0 776.7 1010.4 779.5 C1030.2 782.7 1037.3 806.5 1057.0 809.4 C1074.6 812.0 1085.9 790.9 1103.6 793.2 C1123.2 795.8 1130.1 816.5 1150.2 821.9 C1167.4 826.4 1180.4 825.3 1196.8 818.1 C1217.7 808.9 1222.8 786.3 1243.4 780.8 C1260.0 776.3 1271.1 789.3 1290.0 793.2 C1308.4 797.0 1321.4 807.2 1336.6 800.1 C1358.7 789.7 1363.6 751.6 1383.1 749.7 C1400.8 747.9 1411.2 791.0 1429.7 790.7 C1448.5 790.5 1454.9 758.4 1476.3 748.4 C1492.2 741.0 1511.4 758.9 1522.9 747.2 C1548.7 721.0 1550.7 654.1 1569.5 653.9 C1588.0 653.6 1590.6 718.0 1616.1 745.9 C1627.8 758.8 1646.2 747.3 1662.7 755.9 C1683.5 766.8 1690.2 779.6 1709.2 794.5 C1727.4 808.7 1735.9 825.4 1755.8 828.6 C1773.2 831.4 1783.1 814.2 1802.4 809.4 C1820.4 805.0 1830.4 807.2 1849.0 805.7" fill="none" stroke="#6c46ae" stroke-width="3" stroke-linejoin="round"></path>
<circle cx="498.0" cy="546.8" r="4.5" fill="#6c46ae"></circle>
<circle cx="544.6" cy="734.7" r="4.5" fill="#6c46ae"></circle>
<circle cx="591.2" cy="716.1" r="4.5" fill="#6c46ae"></circle>
<circle cx="637.8" cy="721.1" r="4.5" fill="#6c46ae"></circle>
<circle cx="684.3" cy="709.9" r="4.5" fill="#6c46ae"></circle>
<circle cx="730.9" cy="758.4" r="4.5" fill="#6c46ae"></circle>
<circle cx="777.5" cy="753.4" r="4.5" fill="#6c46ae"></circle>
<circle cx="824.1" cy="747.2" r="4.5" fill="#6c46ae"></circle>
<circle cx="870.7" cy="803.2" r="4.5" fill="#6c46ae"></circle>
<circle cx="917.3" cy="772.1" r="4.5" fill="#6c46ae"></circle>
<circle cx="963.9" cy="794.5" r="4.5" fill="#6c46ae"></circle>
<circle cx="1010.4" cy="779.5" r="4.5" fill="#6c46ae"></circle>
<circle cx="1057.0" cy="809.4" r="4.5" fill="#6c46ae"></circle>
<circle cx="1103.6" cy="793.2" r="4.5" fill="#6c46ae"></circle>
<circle cx="1150.2" cy="821.9" r="4.5" fill="#6c46ae"></circle>
<circle cx="1196.8" cy="818.1" r="4.5" fill="#6c46ae"></circle>
<circle cx="1243.4" cy="780.8" r="4.5" fill="#6c46ae"></circle>
<circle cx="1290.0" cy="793.2" r="4.5" fill="#6c46ae"></circle>
<circle cx="1336.6" cy="800.1" r="4.5" fill="#6c46ae"></circle>
<circle cx="1383.1" cy="749.7" r="4.5" fill="#6c46ae"></circle>
<circle cx="1429.7" cy="790.7" r="4.5" fill="#6c46ae"></circle>
<circle cx="1476.3" cy="748.4" r="4.5" fill="#6c46ae"></circle>
<circle cx="1522.9" cy="747.2" r="4.5" fill="#6c46ae"></circle>
<circle cx="1569.5" cy="653.9" r="4.5" fill="#6c46ae"></circle>
<circle cx="1616.1" cy="745.9" r="4.5" fill="#6c46ae"></circle>
<circle cx="1662.7" cy="755.9" r="4.5" fill="#6c46ae"></circle>
<circle cx="1709.2" cy="794.5" r="4.5" fill="#6c46ae"></circle>
<circle cx="1755.8" cy="828.6" r="4.5" fill="#6c46ae"></circle>
<circle cx="1802.4" cy="809.4" r="4.5" fill="#6c46ae"></circle>
<circle cx="1849.0" cy="805.7" r="4.5" fill="#6c46ae"></circle>
<path d="M498.0 624.0 C516.6 675.3 516.9 712.2 544.6 752.2 C554.1 765.9 572.6 758.6 591.2 758.4 C609.8 758.1 619.1 751.4 637.8 750.9 C656.3 750.4 666.9 750.1 684.3 755.9 C704.2 762.5 711.1 777.8 730.9 782.0 C748.4 785.8 758.8 777.1 777.5 775.8 C796.1 774.6 807.4 769.8 824.1 775.8 C844.7 783.2 850.5 805.1 870.7 809.4 C887.8 813.1 898.8 795.2 917.3 795.7 C936.1 796.2 945.1 811.4 963.9 811.9 C982.4 812.4 992.5 796.3 1010.4 798.2 C1029.8 800.3 1038.0 820.8 1057.0 821.9 C1075.3 822.8 1085.0 803.2 1103.6 803.2 C1122.3 803.2 1130.9 817.7 1150.2 821.9 C1168.2 825.7 1179.2 827.3 1196.8 823.1 C1216.5 818.4 1224.0 801.8 1243.4 799.5 C1261.3 797.3 1271.1 810.4 1290.0 811.9 C1308.3 813.4 1319.7 813.7 1336.6 806.9 C1357.0 798.7 1363.8 776.1 1383.1 774.6 C1401.1 773.1 1410.0 792.9 1429.7 799.5 C1447.3 805.3 1457.9 806.7 1476.3 805.7 C1495.1 804.7 1508.8 805.8 1522.9 794.5 C1546.1 775.9 1548.3 737.0 1569.5 731.0 C1585.6 726.5 1595.1 760.5 1616.1 768.3 C1632.4 774.5 1646.0 760.3 1662.7 765.9 C1683.2 772.7 1690.5 786.2 1709.2 799.5 C1727.8 812.6 1735.6 827.2 1755.8 831.8 C1772.9 835.7 1783.5 823.4 1802.4 820.6 C1820.8 817.9 1830.4 819.1 1849.0 818.1" fill="none" stroke="#f0a11f" stroke-width="3" stroke-linejoin="round"></path>
<circle cx="498.0" cy="624.0" r="4.5" fill="#f0a11f"></circle>
<circle cx="544.6" cy="752.2" r="4.5" fill="#f0a11f"></circle>
<circle cx="591.2" cy="758.4" r="4.5" fill="#f0a11f"></circle>
<circle cx="637.8" cy="750.9" r="4.5" fill="#f0a11f"></circle>
<circle cx="684.3" cy="755.9" r="4.5" fill="#f0a11f"></circle>
<circle cx="730.9" cy="782.0" r="4.5" fill="#f0a11f"></circle>
<circle cx="777.5" cy="775.8" r="4.5" fill="#f0a11f"></circle>
<circle cx="824.1" cy="775.8" r="4.5" fill="#f0a11f"></circle>
<circle cx="870.7" cy="809.4" r="4.5" fill="#f0a11f"></circle>
<circle cx="917.3" cy="795.7" r="4.5" fill="#f0a11f"></circle>
<circle cx="963.9" cy="811.9" r="4.5" fill="#f0a11f"></circle>
<circle cx="1010.4" cy="798.2" r="4.5" fill="#f0a11f"></circle>
<circle cx="1057.0" cy="821.9" r="4.5" fill="#f0a11f"></circle>
<circle cx="1103.6" cy="803.2" r="4.5" fill="#f0a11f"></circle>
<circle cx="1150.2" cy="821.9" r="4.5" fill="#f0a11f"></circle>
<circle cx="1196.8" cy="823.1" r="4.5" fill="#f0a11f"></circle>
<circle cx="1243.4" cy="799.5" r="4.5" fill="#f0a11f"></circle>
<circle cx="1290.0" cy="811.9" r="4.5" fill="#f0a11f"></circle>
<circle cx="1336.6" cy="806.9" r="4.5" fill="#f0a11f"></circle>
<circle cx="1383.1" cy="774.6" r="4.5" fill="#f0a11f"></circle>
<circle cx="1429.7" cy="799.5" r="4.5" fill="#f0a11f"></circle>
<circle cx="1476.3" cy="805.7" r="4.5" fill="#f0a11f"></circle>
<circle cx="1522.9" cy="794.5" r="4.5" fill="#f0a11f"></circle>
<circle cx="1569.5" cy="731.0" r="4.5" fill="#f0a11f"></circle>
<circle cx="1616.1" cy="768.3" r="4.5" fill="#f0a11f"></circle>
<circle cx="1662.7" cy="765.9" r="4.5" fill="#f0a11f"></circle>
<circle cx="1709.2" cy="799.5" r="4.5" fill="#f0a11f"></circle>
<circle cx="1755.8" cy="831.8" r="4.5" fill="#f0a11f"></circle>
<circle cx="1802.4" cy="820.6" r="4.5" fill="#f0a11f"></circle>
<circle cx="1849.0" cy="818.1" r="4.5" fill="#f0a11f"></circle>
<text transform="translate(454 689.3) rotate(-90)" text-anchor="middle" class="ayt">Visitors / Views / Sessions</text>
</svg>

<!-- bottom button sliver -->
<div class="abs" style="left:414px;top:924px;width:155px;height:10px;background:#5126a0;border-radius:4px 4px 0 0"></div>

<!-- scroll to top -->
<div class="abs" style="left:1815px;top:840px;width:56px;height:56px;border-radius:28px;background:#5126a0;box-shadow:0 2px 8px rgba(0,0,0,.25);z-index:20"></div>
<svg class="abs" style="left:1834px;top:859px;z-index:21" width="18" height="18" viewBox="0 0 18 18"><path d="M9 17V2.500M2.300 9L9 2.300l6.700 6.700" fill="none" stroke="#fff" stroke-width="2.800"></path></svg>

<!-- notice -->
<div class="abs" style="left:402px;top:846px;width:726px;height:58px;background:#fff;border-radius:4px;z-index:30;overflow:hidden"><div style="position:absolute;left:0;top:0;width:60px;height:58px;background:#f2a01e"></div></div>
<div class="abs" style="left:422px;top:866px;width:17px;height:17px;border-radius:9px;background:#fff;z-index:31;color:#f2a01e;font-weight:bold;font-size:13px;line-height:17px;text-align:center">!</div>
<div class="abs" id="ntx" style="left:486px;top:866px;height:20px;line-height:20px;font-size:14px;color:#3c3642;white-space:nowrap;z-index:31"><span style="letter-spacing:-0.09px;">Please clear your cache to ensure tracking works properly. </span><span style="color:#5b2fa8;text-decoration:underline"><span style="letter-spacing:-0.19px;">Learn More</span></span></div>
<div class="abs" id="nbtn" style="left:953px;top:858px;width:163px;height:34px;border:1px solid #5b2fa8;border-radius:3px;color:#5b2fa8;font-size:14px;line-height:32px;text-align:center;z-index:31;white-space:nowrap"><span style="letter-spacing:-0.18px;">I've cleared the cache</span></div>


</body></html>
